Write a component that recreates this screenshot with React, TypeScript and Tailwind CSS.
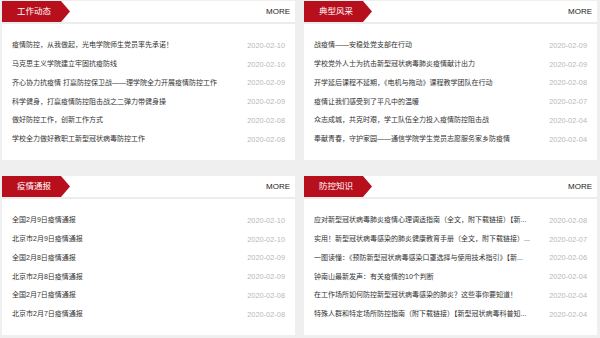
import React from "react";

type Item = { t: string; d: string };

const panels: { title: string; items: Item[] }[] = [
  {
    title: "工作动态",
    items: [
      { t: "疫情防控，从我做起，光电学院师生党员率先承诺！", d: "2020-02-10" },
      { t: "马克思主义学院建立牢固抗疫防线", d: "2020-02-10" },
      { t: "齐心协力抗疫情 打赢防控保卫战——理学院全力开展疫情防控工作", d: "2020-02-09" },
      { t: "科学健身，打赢疫情防控阻击战之二弹力带健身操", d: "2020-02-09" },
      { t: "做好防控工作，创新工作方式", d: "2020-02-08" },
      { t: "学校全力做好教职工新型冠状病毒防控工作", d: "2020-02-08" },
    ],
  },
  {
    title: "典型风采",
    items: [
      { t: "战疫情——安稳处党支部在行动", d: "2020-02-09" },
      { t: "学校党外人士为抗击新型冠状病毒肺炎疫情献计出力", d: "2020-02-09" },
      { t: "开学延后课程不延期，《电机与拖动》课程教学团队在行动", d: "2020-02-08" },
      { t: "疫情让我们感受到了平凡中的温暖", d: "2020-02-07" },
      { t: "众志成城，共克时艰，学工队伍全力投入疫情防控阻击战", d: "2020-02-04" },
      { t: "奉献青春，守护家园——通信学院学生党员志愿服务家乡防疫情", d: "2020-02-04" },
    ],
  },
  {
    title: "疫情通报",
    items: [
      { t: "全国2月9日疫情通报", d: "2020-02-10" },
      { t: "北京市2月9日疫情通报", d: "2020-02-10" },
      { t: "全国2月8日疫情通报", d: "2020-02-09" },
      { t: "北京市2月8日疫情通报", d: "2020-02-09" },
      { t: "全国2月7日疫情通报", d: "2020-02-08" },
      { t: "北京市2月7日疫情通报", d: "2020-02-08" },
    ],
  },
  {
    title: "防控知识",
    items: [
      { t: "应对新型冠状病毒肺炎疫情心理调适指南（全文，附下载链接）【新...", d: "2020-02-08" },
      { t: "实用！新型冠状病毒感染的肺炎健康教育手册（全文，附下载链接）...", d: "2020-02-07" },
      { t: "一图读懂：《预防新型冠状病毒感染口罩选择与使用技术指引》【新...", d: "2020-02-06" },
      { t: "钟南山最新发声：有关疫情的10个判断", d: "2020-02-04" },
      { t: "在工作场所如何防控新型冠状病毒感染的肺炎？这些事你要知道！", d: "2020-02-04" },
      { t: "特殊人群和特定场所防控指南（附下载链接）【新型冠状病毒科普知...", d: "2020-02-04" },
    ],
  },
];

const cjk = { fontFamily: '"Liberation Sans", "Noto Sans CJK SC", sans-serif' };

function Panel({ title, items }: { title: string; items: Item[] }) {
  return (
    <div className="bg-white h-[159px] flex flex-col">
      <div className="flex items-center justify-between h-[23px] border-b-2 border-[#ececec]">
        <div className="h-[21px] w-[68px] bg-[#b80f1d] [clip-path:polygon(0_0,59px_0,68px_50%,59px_100%,0_100%)] flex items-center pl-[15px] text-white text-[8.5px]">
          {title}
        </div>
        <div className="pr-[5px] text-[8px] text-[#222]">MORE</div>
      </div>
      <div className="pt-[12px] pl-[10px] pr-[10px] flex flex-col">
        {items.map((it, i) => (
          <div key={i} className="h-[18.8px] flex items-center justify-between gap-[12px]">
            <div className="min-w-0 whitespace-nowrap text-[7px] text-[#333]">{it.t}</div>
            <div className="shrink-0 text-[7.4px] text-[#b8b8b8]">{it.d}</div>
          </div>
        ))}
      </div>
    </div>
  );
}

export default function App() {
  return (
    <div className="w-[600px] h-[338px] bg-[#efefef] pt-[1px] pl-[2px] pr-[3px] overflow-hidden" style={cjk}>
      <div className="grid grid-cols-2 gap-x-[9px] gap-y-[16px]">
        {panels.map((p) => (
          <Panel key={p.title} title={p.title} items={p.items} />
        ))}
      </div>
    </div>
  );
}
